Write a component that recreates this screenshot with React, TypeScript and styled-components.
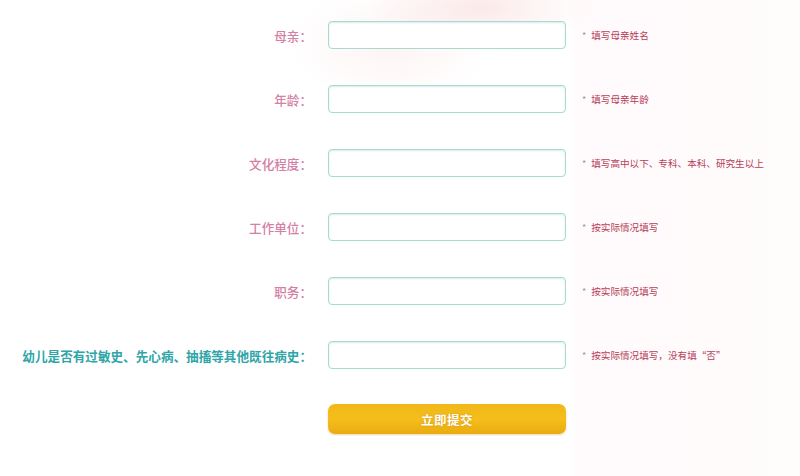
import React from 'react';
import styled, { createGlobalStyle } from 'styled-components';

const GlobalStyle = createGlobalStyle`
  html, body {
    margin: 0;
    padding: 0;
    background: #ffffff;
  }
  body {
    font-family: "Noto Sans CJK SC", "Noto Sans", sans-serif;
  }
`;

const Page = styled.div`
  width: 800px;
  height: 476px;
  overflow: hidden;
  background:
    radial-gradient(ellipse 110px 45px at 480px 8px, rgba(248, 212, 212, 0.5), rgba(255, 255, 255, 0) 100%),
    radial-gradient(ellipse 100px 60px at 390px 45px, rgba(252, 230, 230, 0.45), rgba(255, 255, 255, 0) 100%),
    linear-gradient(90deg, #ffffff 0, #ffffff 570px, #fffafb 580px, #fffcfc 800px);
`;

const Form = styled.form`
  display: grid;
  grid-template-columns: 318px 238px 1fr;
  grid-auto-rows: 28px;
  row-gap: 36px;
  align-items: center;
  padding-top: 21px;
`;

const Label = styled.label<{ $accent?: boolean }>`
  text-align: right;
  padding-right: 6px;
  font-size: 12.6px;
  white-space: nowrap;
  color: ${(p) => (p.$accent ? '#2fa5a8' : '#d47fa4')};
  font-weight: ${(p) => (p.$accent ? 700 : 500)};
`;

const Field = styled.input`
  box-sizing: border-box;
  margin-left: 10px;
  width: 238px;
  height: 28px;
  border: 1px solid #a9d9d2;
  border-radius: 4px;
  background: #ffffff;
  box-shadow: inset 0 1px 2px rgba(120, 170, 170, 0.25);
  outline: none;
`;

const Hint = styled.span`
  display: flex;
  align-items: center;
  gap: 5px;
  padding-left: 26px;
  font-size: 9.6px;
  white-space: nowrap;
  color: #b5405a;
`;

const Star = styled.span`
  color: #999;
  font-size: 9px;
`;

const Spacer = styled.span``;

const Submit = styled.button`
  grid-column: 2;
  margin-left: 10px;
  width: 238px;
  height: 30px;
  border: none;
  border-radius: 7px;
  background: linear-gradient(180deg, #f0b818 0%, #f5be1c 50%, #e9ab10 100%);
  box-shadow: 0 1px 2px rgba(200, 140, 0, 0.35);
  color: #ffffff;
  font-family: "Noto Sans CJK SC", sans-serif;
  font-size: 12.5px;
  font-weight: 700;
  letter-spacing: 0.5px;
  text-shadow: 0 0 2px rgba(180, 110, 0, 0.5);
`;

const rows = [
  { label: '母亲：', hint: '填写母亲姓名' },
  { label: '年龄：', hint: '填写母亲年龄' },
  { label: '文化程度：', hint: '填写高中以下、专科、本科、研究生以上' },
  { label: '工作单位：', hint: '按实际情况填写' },
  { label: '职务：', hint: '按实际情况填写' },
  {
    label: '幼儿是否有过敏史、先心病、抽搐等其他既往病史：',
    hint: '按实际情况填写，没有填“否”',
    accent: true
  }
];

export default function App() {
  return (
    <Page>
      <GlobalStyle />
      <Form onSubmit={(e) => e.preventDefault()}>
        {rows.map((r) => (
          <React.Fragment key={r.label}>
            <Label $accent={r.accent}>{r.label}</Label>
            <Field type='text' />
            <Hint>
              <Star>*</Star>
              {r.hint}
            </Hint>
          </React.Fragment>
        ))}
        <Spacer />
        <Submit type='submit'>立即提交</Submit>
      </Form>
    </Page>
  );
}
